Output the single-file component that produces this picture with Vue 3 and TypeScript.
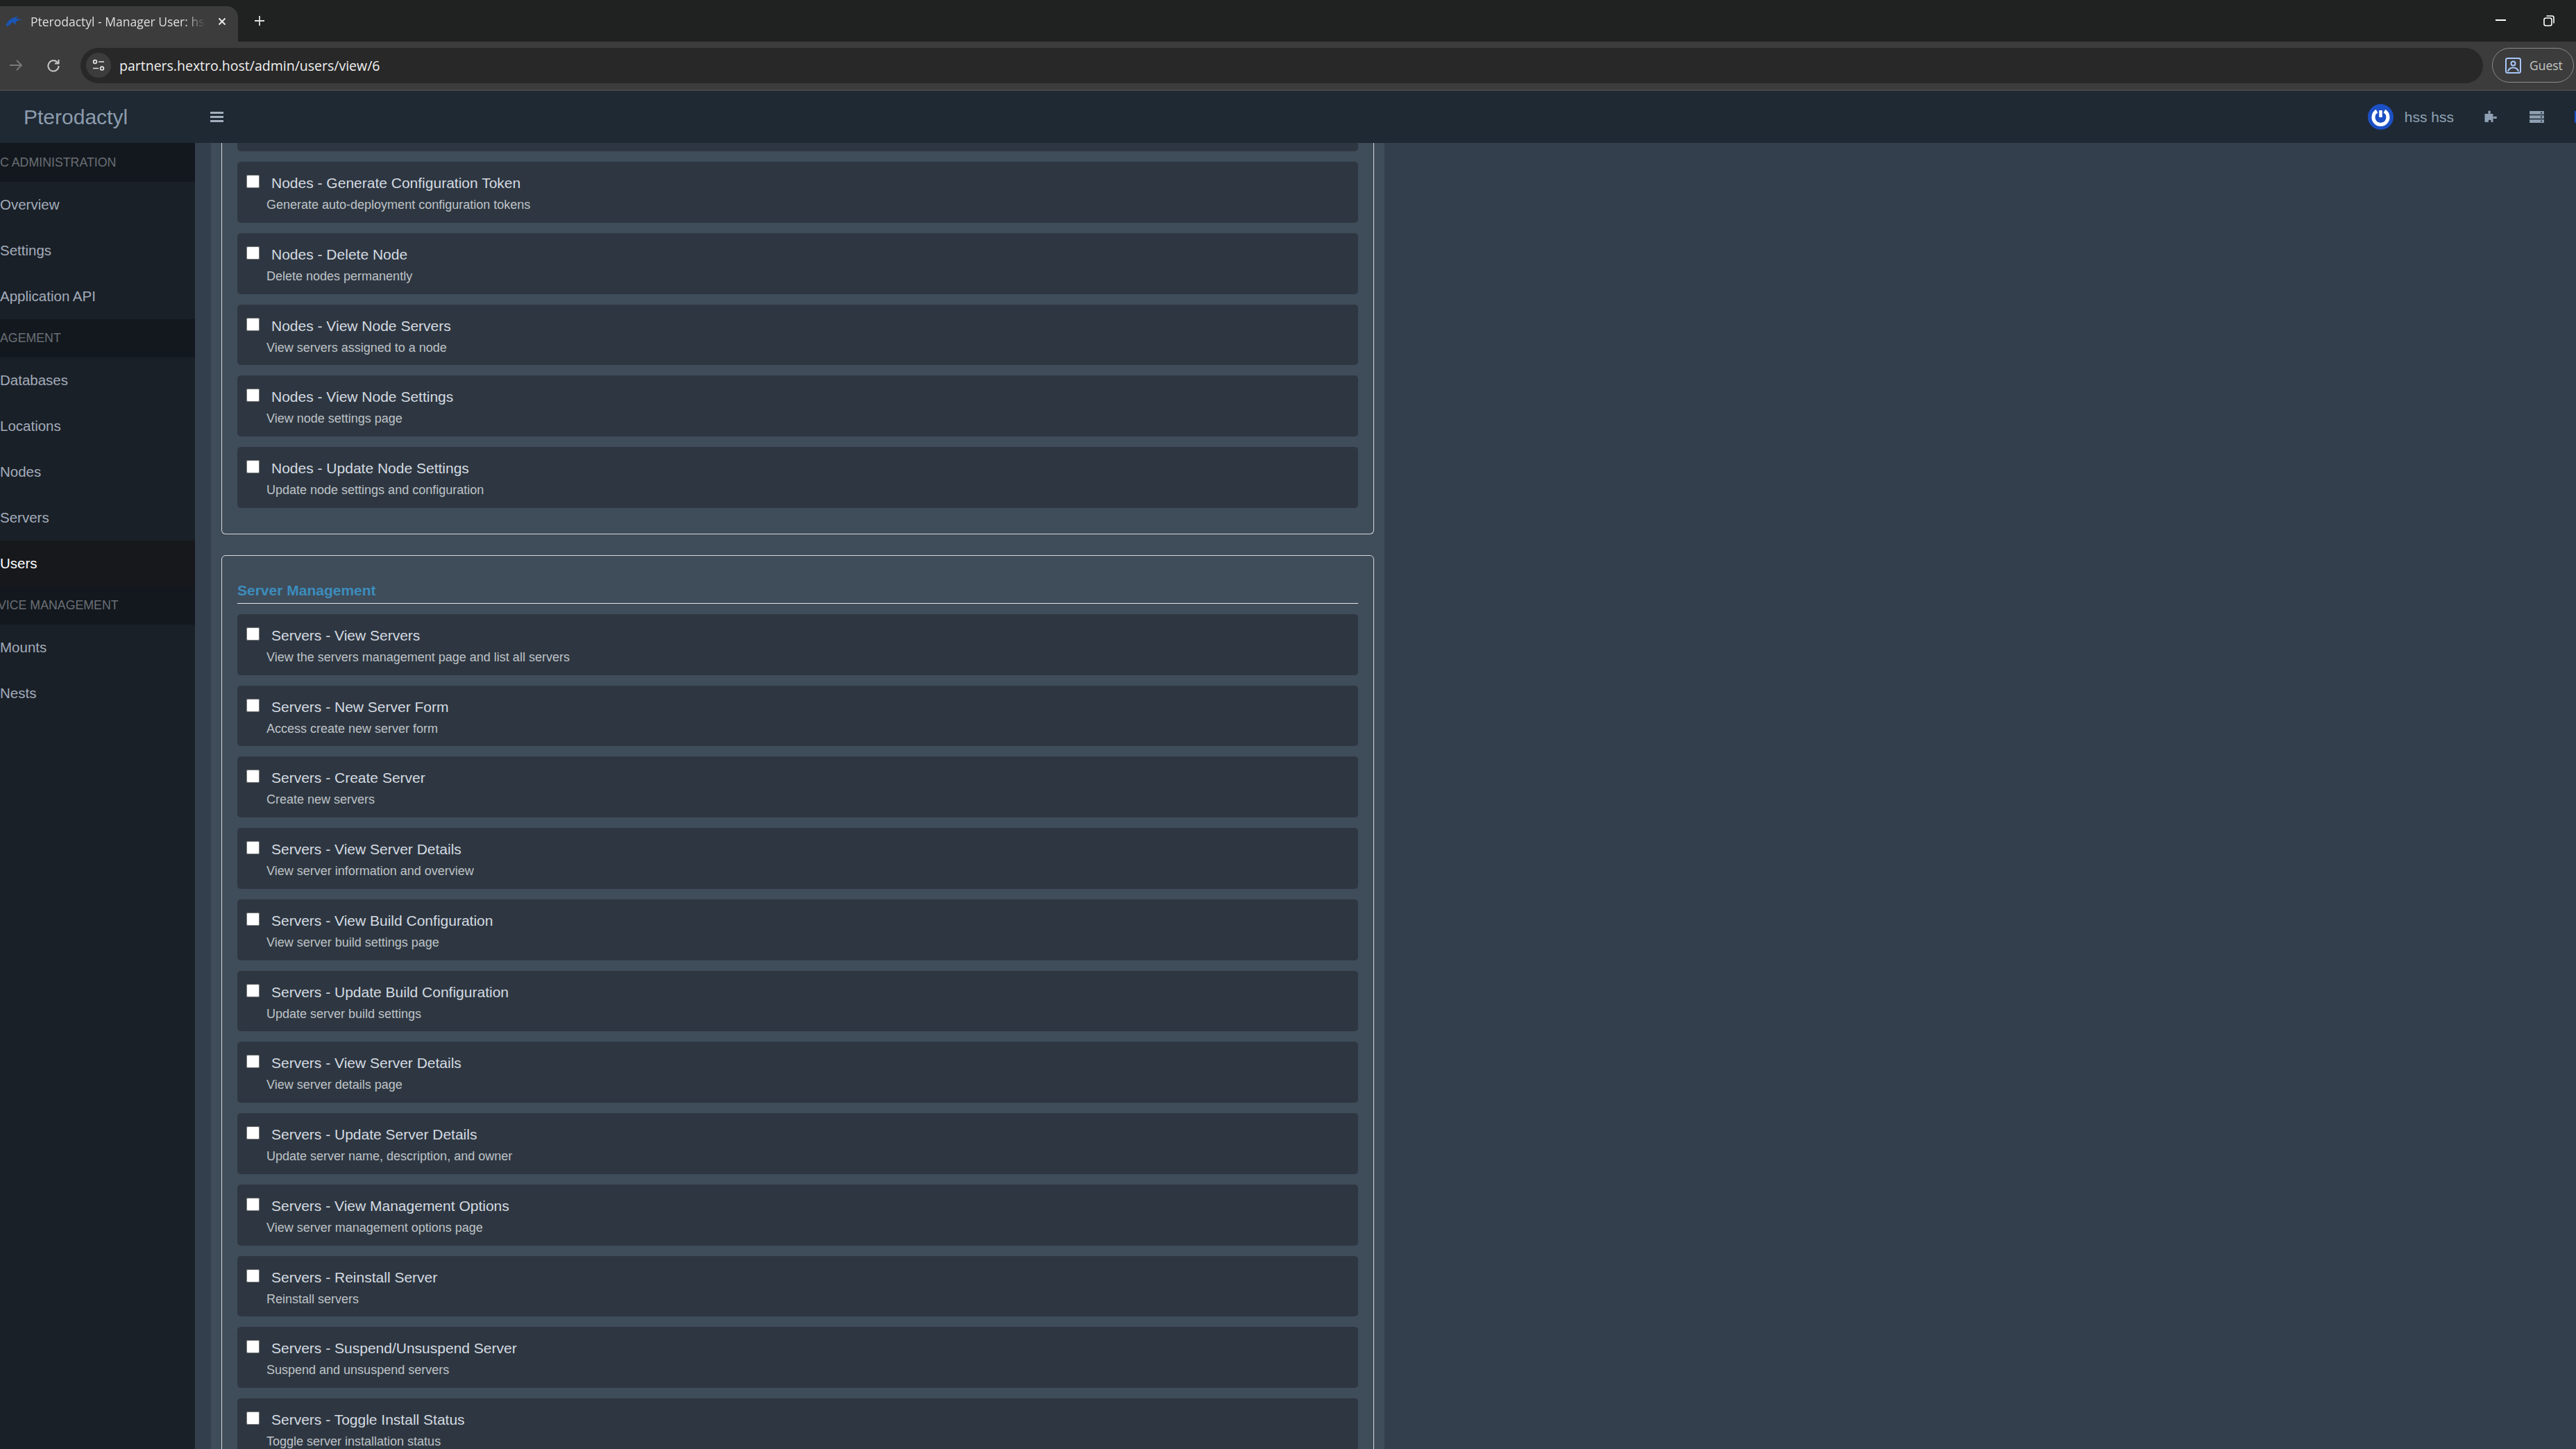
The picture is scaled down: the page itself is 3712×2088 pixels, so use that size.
<template>
  <div class="screen">
    <div class="tabstrip">
      <div class="tab">
        <svg class="favicon" viewBox="0 0 24 16"><path d="M0 15 C2 9 6 4 12 2.5 L18 0 L15 4 L24 5 L17 7 C15 8 14 9 15 13 L10 8.5 C8 11 6 14 0 15 Z" fill="#1a56b8" /></svg>
        <span class="tab-title">Pterodactyl - Manager User: hss</span>
        <svg class="tab-close" viewBox="0 0 12 12"><path d="M1.5 1.5 L10.5 10.5 M10.5 1.5 L1.5 10.5" stroke="#eee" stroke-width="1.8" /></svg>
      </div>
      <svg class="new-tab" viewBox="0 0 16 16"><path d="M8 1 V15 M1 8 H15" stroke="#ddd" stroke-width="1.8" /></svg>
      <div class="win-controls">
        <span class="win-min"></span>
        <svg class="win-restore" viewBox="0 0 16 16" fill="none" stroke="#fff" stroke-width="1.6"><rect x="1" y="4" width="11" height="11" rx="2.5" /><path d="M4.5 1 H12.5 Q15 1 15 3.5 V11.5" /></svg>
      </div>
    </div>
    <div class="toolbar">
      <svg class="nav-icon" viewBox="0 0 20 20" fill="none" stroke="#7a7a7a" stroke-width="1.8"><path d="M1 10 H18 M11 3 L18 10 L11 17" /></svg>
      <svg class="nav-icon reload" viewBox="0 0 20 20" fill="none" stroke="#c8c8c8" stroke-width="2"><path d="M16.5 7 A7.6 7.6 0 1 0 17.6 11" /><path d="M17.5 2 V7.5 H12" /></svg>
      <div class="omnibox">
        <span class="tune">
          <svg viewBox="0 0 18 18" fill="none" stroke="#e3e3e3" stroke-width="1.7"><circle cx="4" cy="4" r="2.4" /><path d="M9 4 H17 M1 13.5 H9" /><circle cx="14" cy="13.5" r="2.4" /></svg>
        </span>
        <span class="url">partners.hextro.host/admin/users/view/6</span>
      </div>
      <div class="guest">
        <svg viewBox="0 0 23 23" fill="none" stroke="#a8c7fa" stroke-width="2"><rect x="1" y="1" width="21" height="21" rx="2.5" /><circle cx="11.5" cy="8.5" r="3" /><path d="M4 20 C5 15.5 8 14.5 11.5 14.5 C15 14.5 18 15.5 19 20" /></svg>
        <span>Guest</span>
      </div>
    </div>
    <header class="topbar">
      <div class="brand">Pterodactyl</div>
      <div class="burger"><i></i><i></i><i></i></div>
      <div class="top-right">
        <svg class="avatar" viewBox="0 0 37 37"><circle cx="18.5" cy="18.5" r="18.5" fill="#1c50c4" /><path d="M13 10 A10.5 10.5 0 1 0 24 10" fill="none" stroke="#fff" stroke-width="5" /><path d="M18.5 9 V19" stroke="#fff" stroke-width="4.5" /></svg>
        <span class="username">hss hss</span>
        <svg class="top-icon puzzle" viewBox="0 0 20 20"><path d="M0 5 H5.5 C5 3 4.8 2.5 5 1.5 C5.5 0 8 0 8.4 1.5 C8.6 2.5 8 3.5 7.8 5 H12 V9.6 C14 9 15 8.8 16 8.8 C18 8.8 18 12 16 12 C15 12 14 11.8 12 11.4 V17 H9 C9.5 15.5 9.5 14 7.5 13.8 C5 13.8 5 15.5 5.7 17 H0 Z" fill="#8fa0b3" /></svg>
        <svg class="top-icon" viewBox="0 0 22 18"><path fill-rule="evenodd" d="M0 0 H22 V5 H0 Z M17 1.6 h2 v2 h-2 Z M0 6.5 H22 V11.5 H0 Z M17 8 h2 v2 h-2 Z M0 13 H22 V18 H0 Z M17 14.5 h2 v2 h-2 Z" fill="#8fa0b3" /></svg>
        <span class="edge-icon"></span>
      </div>
    </header>
    <div class="body">
      <aside class="sidebar">
        <template v-for="entry in nav" :key="entry.label">
          <div v-if="entry.kind === 'head'" class="nav-head" :class="entry.cls">{{ entry.label }}</div>
          <div v-else class="nav-link" :class="{ active: entry.active }">{{ entry.label }}</div>
        </template>
      </aside>
      <main class="main">
        <div class="column">
          <section class="group first">
            <div class="stub"></div>
            <div v-for="p in nodePerms" :key="p.title" class="perm">
              <div class="perm-row">
                <input type="checkbox" />
                <label>{{ p.title }}</label>
              </div>
              <small>{{ p.desc }}</small>
            </div>
          </section>
          <section class="group">
            <h4>Server Management</h4>
            <div v-for="p in serverPerms" :key="p.title + p.desc" class="perm">
              <div class="perm-row">
                <input type="checkbox" />
                <label>{{ p.title }}</label>
              </div>
              <small>{{ p.desc }}</small>
            </div>
          </section>
        </div>
      </main>
    </div>
  </div>
</template>

<script setup lang="ts">
interface NavEntry { kind: 'head' | 'link'; label: string; active?: boolean; cls?: string }
interface Perm { title: string; desc: string }

const nav: NavEntry[] = [
  { kind: 'head', label: 'C ADMINISTRATION', cls: 'h56' },
  { kind: 'link', label: 'Overview' },
  { kind: 'link', label: 'Settings' },
  { kind: 'link', label: 'Application API' },
  { kind: 'head', label: 'AGEMENT' },
  { kind: 'link', label: 'Databases' },
  { kind: 'link', label: 'Locations' },
  { kind: 'link', label: 'Nodes' },
  { kind: 'link', label: 'Servers' },
  { kind: 'link', label: 'Users', active: true },
  { kind: 'head', label: 'VICE MANAGEMENT', cls: 'clip' },
  { kind: 'link', label: 'Mounts' },
  { kind: 'link', label: 'Nests' },
]

const nodePerms: Perm[] = [
  { title: 'Nodes - Generate Configuration Token', desc: 'Generate auto-deployment configuration tokens' },
  { title: 'Nodes - Delete Node', desc: 'Delete nodes permanently' },
  { title: 'Nodes - View Node Servers', desc: 'View servers assigned to a node' },
  { title: 'Nodes - View Node Settings', desc: 'View node settings page' },
  { title: 'Nodes - Update Node Settings', desc: 'Update node settings and configuration' },
]

const serverPerms: Perm[] = [
  { title: 'Servers - View Servers', desc: 'View the servers management page and list all servers' },
  { title: 'Servers - New Server Form', desc: 'Access create new server form' },
  { title: 'Servers - Create Server', desc: 'Create new servers' },
  { title: 'Servers - View Server Details', desc: 'View server information and overview' },
  { title: 'Servers - View Build Configuration', desc: 'View server build settings page' },
  { title: 'Servers - Update Build Configuration', desc: 'Update server build settings' },
  { title: 'Servers - View Server Details', desc: 'View server details page' },
  { title: 'Servers - Update Server Details', desc: 'Update server name, description, and owner' },
  { title: 'Servers - View Management Options', desc: 'View server management options page' },
  { title: 'Servers - Reinstall Server', desc: 'Reinstall servers' },
  { title: 'Servers - Suspend/Unsuspend Server', desc: 'Suspend and unsuspend servers' },
  { title: 'Servers - Toggle Install Status', desc: 'Toggle server installation status' },
]
</script>

<style>
html, body { margin: 0; background: #343f4d; overflow: hidden; }
</style>

<style scoped>
.screen { width: 3712px; height: 2088px; overflow: hidden; display: flex; flex-direction: column; font-family: "Liberation Sans", Arial, sans-serif; }

.tabstrip { height: 60px; flex: none; background: #202221; display: flex; align-items: flex-end; font-family: "Open Sans", sans-serif; }
.tab { width: 343px; height: 51px; background: #3c3c3c; border-radius: 0 16px 0 0; display: flex; align-items: center; padding: 0 0 7px 8px; box-sizing: border-box; }
.favicon { width: 24px; height: 16px; flex: none; }
.tab-title { width: 252px; margin-left: 12px; font-size: 17.5px; color: #dfdfdf; white-space: nowrap; overflow: hidden; -webkit-mask-image: linear-gradient(to right, #000 88%, transparent 100%); mask-image: linear-gradient(to right, #000 88%, transparent 100%); }
.tab-close { width: 12px; height: 12px; margin-left: 18px; }
.new-tab { width: 16px; height: 16px; margin: 0 0 22px 23px; }
.win-controls { margin-left: auto; height: 100%; display: flex; align-items: flex-start; }
.win-min { width: 15px; height: 2px; background: #fff; margin: 28px 54px 0 0; }
.win-restore { width: 16px; height: 16px; margin: 22px 31px 0 0; }

.toolbar { height: 71px; flex: none; box-sizing: border-box; background: #3c3c3c; border-bottom: 2px solid #474747; display: flex; align-items: center; font-family: "Open Sans", sans-serif; padding-bottom: 1px; }
.nav-icon { width: 20px; height: 20px; margin-left: 13px; flex: none; }
.nav-icon.reload { margin-left: 34px; }
.omnibox { margin-left: 29px; width: 3462px; height: 51px; background: #282828; border-radius: 26px; display: flex; align-items: center; padding-left: 8px; box-sizing: border-box; }
.tune { width: 36px; height: 36px; border-radius: 50%; background: #3c3c3c; display: flex; align-items: center; justify-content: center; }
.tune svg { width: 18px; height: 18px; }
.url { margin-left: 12px; font-size: 19.5px; color: #f1f1f1; }
.guest { margin-left: 13px; width: 118px; height: 50px; box-sizing: border-box; border: 1.5px solid #8c8c8c; border-radius: 25px; display: flex; align-items: center; padding-left: 18px; color: #c4c7c5; font-size: 17.5px; }
.guest svg { width: 23px; height: 23px; margin-right: 12px; }

.topbar { height: 75px; flex: none; background: #1f2933; display: flex; align-items: center; overflow: hidden; }
.brand { width: 281px; box-sizing: border-box; padding-left: 34px; font-size: 30px; color: #8c9cae; }
.burger { margin-left: 22px; width: 19px; display: flex; flex-direction: column; gap: 3px; }
.burger i { display: block; height: 3px; background: #a4afbd; }
.top-right { margin-left: auto; display: flex; align-items: center; }
.avatar { width: 37px; height: 37px; }
.username { margin-left: 16px; font-size: 21px; color: #8fa3b5; }
.top-icon { width: 21px; height: 17px; flex: none; }
.puzzle { margin-left: 44px; width: 21px; height: 20px; }
.top-icon:not(.puzzle) { margin-left: 44px; }
.edge-icon { width: 2px; height: 17px; margin-left: 44px; background: #1c50c4; }

.body { flex: 1; min-height: 0; display: flex; overflow: hidden; }
.sidebar { width: 281px; flex: none; background: #1a2028; font-size: 20.5px; }
.nav-head { height: 55px; background: #13181e; color: #6a6f75; font-size: 17.75px; display: flex; align-items: center; white-space: nowrap; }
.nav-head.h56 { height: 56px; }
.nav-head.clip { text-indent: -3px; }
.nav-link { height: 66px; display: flex; align-items: center; color: #a3acba; }
.nav-link.active { background: #16181c; color: #fff; }

.main { flex: 1; padding-left: 23px; background: #343f4d; min-width: 0; }
.column { width: 1691px; box-sizing: border-box; padding: 0 15px; background: #3f4c5a; height: 100%; }
.group { border: 1.5px solid #d6dadd; border-radius: 6px; padding: 0 22px 37px; margin-bottom: 30px; }
.group.first { border-top: none; border-top-left-radius: 0; border-top-right-radius: 0; }
.stub { height: 12px; background: #2e3741; border-radius: 0 0 5px 5px; margin-bottom: 15px; }
h4 { margin: 0 0 15px; height: 69px; box-sizing: border-box; border-bottom: 1.5px solid #e6e8ea; padding-top: 39px; font-size: 21px; line-height: 22px; font-weight: 700; color: #3c8dbc; }
.perm { height: 87.75px; box-sizing: border-box; background: #2e3741; border-radius: 5px; margin-bottom: 15px; padding: 19px 13px 0; }
.perm:last-child { margin-bottom: 0; }
.perm-row { display: flex; align-items: flex-start; height: 24px; }
input[type="checkbox"] { width: 19px; height: 19px; margin: 0 -1px 0 0; flex: none; }
label { margin-left: 18px; font-size: 21px; line-height: 24px; color: #d5dbe2; }
small { display: block; margin: 8px 0 0 29px; font-size: 18px; line-height: 22px; color: #bfc3c8; }
</style>
